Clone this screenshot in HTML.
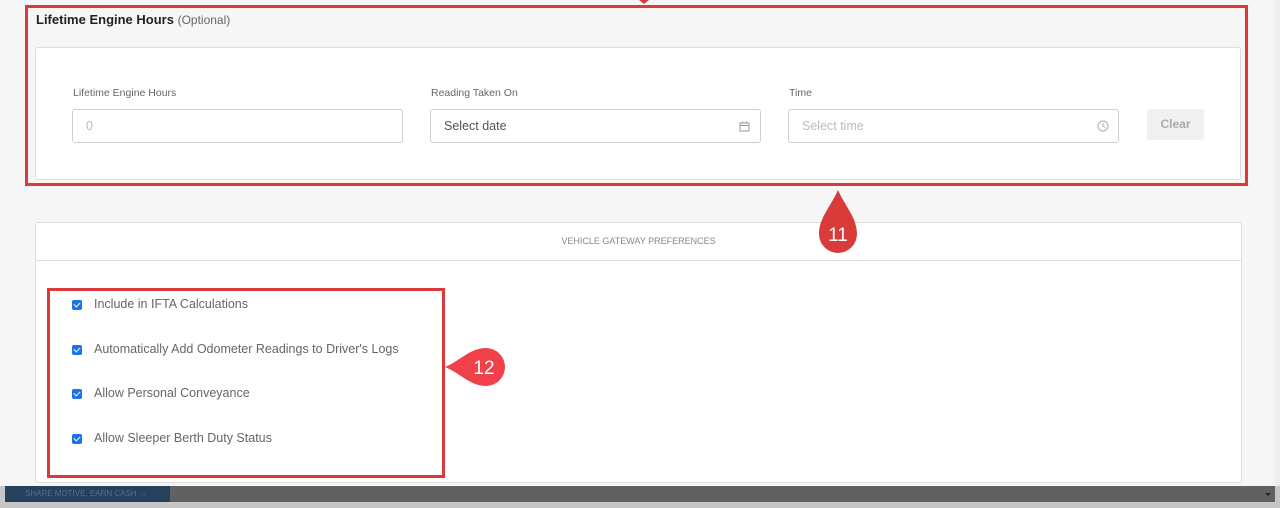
<!DOCTYPE html>
<html><head><style>
*{margin:0;padding:0;box-sizing:border-box}
body{width:1280px;height:508px;background:#f6f6f6;font-family:"Liberation Sans",sans-serif;position:relative;overflow:hidden}
.a{position:absolute}
.lbl{font-size:10.5px;color:#666}
.inp{position:absolute;height:34px;border:1px solid #cfcfcf;border-radius:3px;background:#fff;font-size:12.5px;padding-left:13px;line-height:32px}
.cb{position:absolute;left:72px;width:10px;height:10px;background:#1a73e8;border-radius:2px}
.cb:after{content:"";position:absolute;left:3px;top:1px;width:3px;height:5px;border:solid #fff;border-width:0 1.5px 1.5px 0;transform:rotate(45deg)}
.ct{position:absolute;left:94px;font-size:12.5px;color:#666}
</style></head><body>
<div class="a" style="left:639px;top:0;width:0;height:0;border-left:5px solid transparent;border-right:5px solid transparent;border-top:4px solid #dc3a3a"></div>
<div class="a" style="left:25px;top:5px;width:1223px;height:181px;border:3px solid #dc3a3a"></div>
<div class="a" style="left:36px;top:12px;font-size:13px;font-weight:bold;color:#222">Lifetime Engine Hours <span style="font-weight:normal;color:#666;font-size:12px">(Optional)</span></div>
<div class="a" style="left:35px;top:47px;width:1206px;height:133px;background:#fff;border:1px solid #ddd;border-radius:3px"></div>
<div class="a lbl" style="left:73px;top:87px">Lifetime Engine Hours</div>
<div class="a lbl" style="left:431px;top:87px">Reading Taken On</div>
<div class="a lbl" style="left:789px;top:87px">Time</div>
<div class="inp" style="left:72px;top:109px;width:331px;color:#bbb">0</div>
<div class="inp" style="left:430px;top:109px;width:331px;color:#555">Select date
<svg class="a" style="right:10px;top:11px" width="11" height="11" viewBox="0 0 11 11"><rect x="1" y="2" width="9" height="8" fill="none" stroke="#999"/><line x1="1" y1="4.5" x2="10" y2="4.5" stroke="#999"/><line x1="3.5" y1="0.5" x2="3.5" y2="2.5" stroke="#999"/><line x1="7.5" y1="0.5" x2="7.5" y2="2.5" stroke="#999"/></svg></div>
<div class="inp" style="left:788px;top:109px;width:331px;color:#bbb">Select time
<svg class="a" style="right:9px;top:10px" width="12" height="12" viewBox="0 0 12 12"><circle cx="6" cy="6" r="5" fill="none" stroke="#aaa"/><path d="M6 3v3l2 1.5" fill="none" stroke="#aaa"/></svg></div>
<div class="a" style="left:1147px;top:109px;width:57px;height:31px;background:#f0f0f0;border-radius:3px;font-size:12px;font-weight:bold;color:#aaa;text-align:center;line-height:31px">Clear</div>

<div class="a" style="left:35px;top:222px;width:1207px;height:261px;background:#fff;border:1px solid #ddd;border-radius:3px"></div>
<div class="a" style="left:36px;top:260px;width:1205px;height:1px;background:#ddd"></div>
<div class="a" style="left:36px;top:236px;width:1205px;text-align:center;font-size:9px;color:#888">VEHICLE GATEWAY PREFERENCES</div>
<div class="a" style="left:47px;top:288px;width:398px;height:190px;border:3px solid #dc3a3a"></div>
<div class="cb" style="top:300px"></div><div class="ct" style="top:297px">Include in IFTA Calculations</div>
<div class="cb" style="top:345px"></div><div class="ct" style="top:342px">Automatically Add Odometer Readings to Driver's Logs</div>
<div class="cb" style="top:389px"></div><div class="ct" style="top:386px">Allow Personal Conveyance</div>
<div class="cb" style="top:434px"></div><div class="ct" style="top:431px">Allow Sleeper Berth Duty Status</div>

<svg class="a" style="left:815px;top:188px" width="46" height="72" viewBox="0 0 46 72"><path d="M23 2 C30 18 42 30 42 46 A19 19 0 0 1 4 46 C4 30 16 18 23 2Z" fill="#d93a3a"/><text x="23" y="53" font-size="19" fill="#fff" text-anchor="middle" font-family="Liberation Sans">11</text></svg>
<svg class="a" style="left:444px;top:345px" width="64" height="44" viewBox="0 0 64 44"><path d="M1 22 C16 16 26 3 42 3 A19 19 0 0 1 42 41 C26 41 16 28 1 22Z" fill="#f0414a"/><text x="40" y="29" font-size="19" fill="#fff" text-anchor="middle" font-family="Liberation Sans">12</text></svg>

<div class="a" style="left:0;top:486px;width:1280px;height:22px;background:#c6c6c6"></div>
<div class="a" style="left:5px;top:486px;width:1270px;height:16px;background:#616161"></div>
<div class="a" style="left:5px;top:486px;width:165px;height:16px;background:#26405f;font-size:8px;color:#55708f;line-height:16px;padding-left:20px">SHARE MOTIVE, EARN CASH →</div>
<div class="a" style="left:1265px;top:493px;width:0;height:0;border-left:3px solid transparent;border-right:3px solid transparent;border-top:3px solid #222"></div>
<div class="a" style="left:1275px;top:0;width:5px;height:486px;background:#eee"></div>
</body></html>
